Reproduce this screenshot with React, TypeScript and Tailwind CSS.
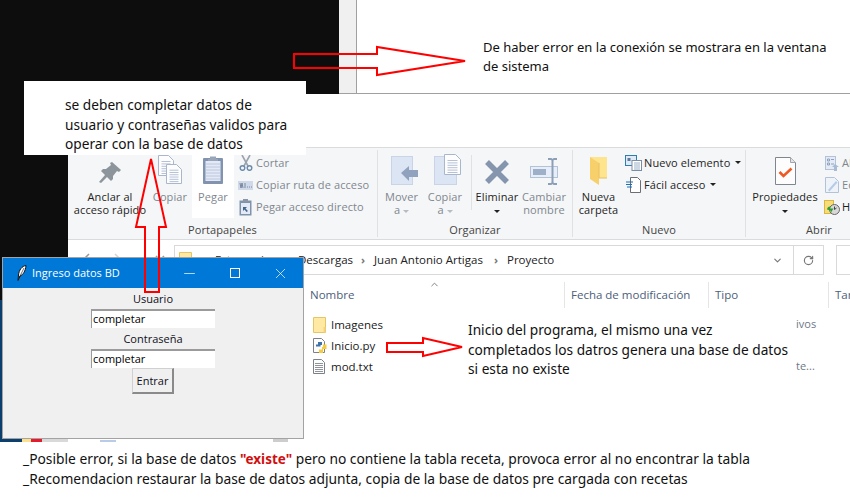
import React from 'react';
import { ChevronDown, ChevronUp, Minus, RotateCw, X } from 'lucide-react';

const uiFont = "font-['Open_Sans','Noto_Sans',sans-serif]";
const noteFont = "font-['Noto_Sans','Open_Sans',sans-serif]";

const Caret = ({ dim = false }: { dim?: boolean }) => (
  <span className={`inline-block w-0 h-0 border-x-[3.5px] border-x-transparent border-t-[3.5px] align-middle ${dim ? 'border-t-[#b5bcc4]' : 'border-t-[#222]'}`} />
);

const PinIcon = () => (
  <svg width="24" height="24" viewBox="0 0 24 24">
    <path d="M14 1l9 8-2 2-2-1-4 5 0 3-2 2-4-4-6 6-2-1 6-7-4-4 2-2 3 0 5-4-1-2z" fill="#8d959c" />
  </svg>
);

const DocLines = ({ x, y, w, h }: { x: number; y: number; w: number; h: number }) => (
  <g>
    <path d={`M${x} ${y}h${w - 5}l5 5v${h - 5}h-${w}z`} fill="#fdfdfe" stroke="#a9b6cc" />
    {[0.3, 0.42, 0.54, 0.66, 0.78, 0.9].map((p) => (
      <path key={p} d={`M${x + 3} ${y + h * p}h${w - 6}`} stroke="#b6c1d6" strokeWidth="1" />
    ))}
  </g>
);

const CopyIcon = () => (
  <svg width="25" height="30" viewBox="0 0 25 30">
    <DocLines x={0.5} y={0.5} w={15} h={20} />
    <DocLines x={8.5} y={9.5} w={15} h={19} />
  </svg>
);

const PasteIcon = () => (
  <svg width="22" height="30" viewBox="0 0 22 30">
    <rect x="1" y="3" width="20" height="26" rx="1" fill="#8193ae" />
    <rect x="3.5" y="6" width="15" height="20" fill="#e3e9f6" />
    {[9, 12, 15, 18, 21, 24].map((y) => (
      <path key={y} d={`M4 ${y}h14`} stroke="#bcc7dc" />
    ))}
    <path d="M8 4V1.5h6V4h2v2H6V4z" fill="#99a5b8" />
  </svg>
);

const ScissorsIcon = () => (
  <svg width="14" height="16" viewBox="0 0 14 16">
    <path d="M3 0l6 11M11 0L5 11" stroke="#9aa3ae" strokeWidth="1.6" fill="none" />
    <circle cx="3.5" cy="13" r="2.3" fill="none" stroke="#6d8bad" strokeWidth="1.5" />
    <circle cx="10.5" cy="13" r="2.3" fill="none" stroke="#6d8bad" strokeWidth="1.5" />
  </svg>
);

const PathIcon = () => (
  <svg width="15" height="9" viewBox="0 0 15 9">
    <rect width="15" height="9" fill="#cfd9ea" />
    <path d="M2 2l1 5 1-5 1 5M7 2v5M9 6h1M11 6h1M13 6h1" stroke="#66758c" strokeWidth="0.8" fill="none" />
  </svg>
);

const PasteLinkIcon = () => (
  <svg width="13" height="17" viewBox="0 0 13 17">
    <rect x="0.5" y="1.5" width="12" height="15" fill="#7f93ab" />
    <rect x="2" y="4" width="9" height="11" fill="#e3e9f6" />
    <rect x="4" y="0" width="5" height="3" fill="#8a96a8" />
    <path d="M4 12V8h4l-1.5 1.5L9 12l-1.500 1-2-2.500L4 12z" fill="#41658c" />
  </svg>
);

const MoveIcon = () => (
  <svg className="ml-[6px]" width="27" height="29" viewBox="0 0 27 29">
    <rect x="0.500" y="0.500" width="21" height="28" fill="#dce5f3" stroke="#c9d4e6" />
    <path d="M10 17l8-7v4h9v7h-9v4z" fill="#90a2bd" />
  </svg>
);

const CopyToIcon = () => (
  <svg className="ml-[4px]" width="27" height="31" viewBox="0 0 27 31">
    <rect x="0.500" y="2.500" width="22" height="28" fill="#dce5f3" stroke="#c9d4e6" />
    <DocLines x={10.5} y={0.5} w={16} h={20} />
  </svg>
);

const DeleteIcon = () => (
  <svg width="26" height="26" viewBox="0 0 26 26">
    <path d="M3 3l20 20M23 3L3 23" stroke="#8595ae" strokeWidth="5.500" />
  </svg>
);

const RenameIcon = () => (
  <svg width="29" height="27" viewBox="0 0 29 27">
    <rect x="0.500" y="8.500" width="27" height="11" fill="#e7eefa" stroke="#b4c2d8" />
    <rect x="3" y="11" width="13" height="6" fill="#9eb0c9" />
    <path d="M18 1h3l1.500 1 1.500-1h3M18 26h3l1.500-1 1.500 1h3M22.500 2v23" stroke="#8d9fb8" strokeWidth="2" fill="none" />
  </svg>
);

const NewFolderIcon = () => (
  <svg width="19" height="29" viewBox="0 0 19 29">
    <path d="M1 1h17v21H1z" fill="#ffe48e" />
    <path d="M1 1l9 6v22l-9-6z" fill="#f7cf6b" />
    <path d="M10 7v15h8" fill="none" stroke="#e8c060" />
  </svg>
);

const NewItemIcon = () => (
  <svg width="17" height="16" viewBox="0 0 17 16">
    <rect x="0.500" y="0.500" width="11" height="10" fill="#dfeaf7" stroke="#2f7dac" />
    <rect x="2.500" y="3" width="3" height="3" fill="#5c7a99" />
    <rect x="7" y="5.500" width="9.500" height="10" fill="#fff" stroke="#7b8da6" />
    <path d="M9 8h6M9 10h6M9 12h6M9 14h6" stroke="#9cb0c8" />
  </svg>
);

const EasyAccessIcon = () => (
  <svg width="15" height="16" viewBox="0 0 15 16">
    <path d="M4.500 0.500h7l3 3v12h-10z" fill="#fff" stroke="#6b6f75" />
    <path d="M0 5h7M0 7.500h6M1 10h5" stroke="#1b6fb8" strokeWidth="1.200" />
  </svg>
);

const PropertiesIcon = () => (
  <svg width="21" height="28" viewBox="0 0 21 28">
    <path d="M0.500 0.500h15l5 5v22h-20z" fill="#fdfdfd" stroke="#80868d" />
    <path d="M15.500 0.500v5h5" fill="#e2e4e7" stroke="#a2a6ab" />
    <path d="M4.500 15l4 4 8-7.500" fill="none" stroke="#ee5a24" strokeWidth="2.600" />
  </svg>
);

const OpenIcon = () => (
  <svg width="14" height="15" viewBox="0 0 14 15">
    <rect x="0.500" y="0.500" width="10" height="13" fill="#e4ebf6" stroke="#b4c2d8" />
    <path d="M2.500 3h2v2h-2zM2.500 7h2v2h-2zM6 3.500h3M6 8h3" stroke="#8ea2bd" fill="none" />
    <path d="M10 8l-3 3h2v4h3v-4h2z" fill="#a9bbd3" />
  </svg>
);

const EditIcon = () => (
  <svg width="14" height="16" viewBox="0 0 14 16">
    <path d="M0.500 0.500h9l4 4v11H0.500z" fill="#eef3fa" stroke="#b4c2d8" />
    <path d="M3 13l8-9 1.500 1.500-8 9z" fill="#b6cbe6" />
  </svg>
);

const HistoryIcon = () => (
  <svg width="16" height="15" viewBox="0 0 16 15">
    <rect x="0.500" y="0.500" width="9" height="13" fill="#f7dc78" stroke="#d8b642" />
    <circle cx="10.500" cy="9.500" r="5" fill="#d8d8d8" stroke="#666" />
    <path d="M10.500 6.500v3l2-1.500" stroke="#444" fill="none" />
    <path d="M3 9.500a3.500 3.500 0 0 1 4-3l-1.500 2 4 0-2.500 4-.5-2z" fill="#2e9e37" />
  </svg>
);

const FolderSmall = () => (
  <svg width="13" height="16" viewBox="0 0 13 16">
    <path d="M0.500 0.500h12v15H0.500z" fill="#ffe9a3" stroke="#e6c566" />
    <path d="M10.500 10v5.500h2V10z" fill="#f4d57e" />
  </svg>
);

const PythonFileIcon = () => (
  <svg width="15" height="16" viewBox="0 0 15 16">
    <path d="M0.500 0.500h8l3 3v11H0.500z" fill="#fdfdfd" stroke="#7c8087" />
    <path d="M5 4h4v3H7.500v1.500H3V6.500h2z" fill="#3d73a8" />
    <path d="M10 6.500h3.500V11H10v4H6v-3.500h3V9h1z" fill="#f7cc3c" />
  </svg>
);

const TextFileIcon = () => (
  <svg width="12" height="15" viewBox="0 0 12 15">
    <path d="M0.500 0.500h8l3 3v11h-11z" fill="#fdfdfd" stroke="#7c8087" />
    {[4, 6, 8, 10, 12].map((y) => (
      <path key={y} d={`M2 ${y + 0.5}h8`} stroke="#8f939a" />
    ))}
  </svg>
);

const FeatherIcon = () => (
  <svg width="10" height="16" viewBox="0 0 10 16">
    <path d="M9 0.500C5 1 2 5 1.500 10L1 15.500 3 11c3-1 5.500-5 6-10.500z" fill="#fff" stroke="#111" strokeWidth="1" />
    <path d="M2 13L7 3" stroke="#111" strokeWidth="0.600" />
  </svg>
);

// one big ribbon button, icon on top and up to two label lines
const RibbonButton = ({
  icon,
  lines,
  width,
  dim = false,
  caret,
  active = false,
}: {
  icon: React.ReactNode;
  lines: string[];
  width: string;
  dim?: boolean;
  caret?: boolean;
  active?: boolean;
}) => (
  <div className={`flex flex-col items-center shrink-0 h-[68px] ${width} ${active ? 'bg-white' : ''}`}>
    <div className="h-[35px] flex items-end justify-center">{icon}</div>
    <div className={`mt-[5px] text-center leading-[13px] text-[11px] tracking-[0.1px] whitespace-nowrap ${dim ? 'text-[#7f8790]' : 'text-[#1e1e1e]'}`}>
      {lines.map((l, i) => (
        <div key={l}>
          {l}
          {caret && dim && i === lines.length - 1 ? <span className="ml-[3px]"><Caret dim /></span> : null}
        </div>
      ))}
      {caret && !dim ? <div><Caret /></div> : null}
    </div>
  </div>
);

const RibbonSmall = ({ icon, text, dim = false, caret = false }: { icon: React.ReactNode; text: string; dim?: boolean; caret?: boolean }) => (
  <div className={`h-[22px] flex items-center whitespace-nowrap text-[11px] tracking-[0.1px] ${dim ? 'text-[#7f8790]' : 'text-[#1e1e1e]'}`}>
    <span className="w-[19px] flex justify-center shrink-0">{icon}</span>
    <span className="ml-[1px]">{text}</span>
    {caret ? <span className="ml-[5px] -mt-[3px]"><Caret /></span> : null}
  </div>
);

const GroupLabel = ({ children }: { children: React.ReactNode }) => (
  <div className="mt-[4px] text-center text-[11px] tracking-[0.1px] text-[#444] leading-[16px]">{children}</div>
);

const Sep = ({ className }: { className: string }) => (
  <span className={`text-[#777] font-bold text-[11px] ${className}`}>›</span>
);

const Explorer = () => (
  <div className={`absolute left-[68px] top-[94px] w-[782px] h-[348px] bg-white overflow-hidden ${uiFont}`}>
    <div className="h-[53px]" />
    {/* ribbon */}
    <div className="h-[93px] flex bg-[#f5f6f7] border-y border-[#dadbdc]">
      <div className="w-[310px] shrink-0 border-r border-[#dfe1e3] my-[2px] flex flex-col">
        <div className="flex h-[68px]">
          <RibbonButton icon={<PinIcon />} lines={['Anclar al', 'acceso rápido']} width="w-[84px]" />
          <RibbonButton icon={<CopyIcon />} lines={['Copiar']} width="w-[36px]" dim />
          <div className="w-[4px] shrink-0" />
          <RibbonButton icon={<PasteIcon />} lines={['Pegar']} width="w-[42px]" dim active />
          <div className="ml-[2px] mt-[2px] flex flex-col">
            <RibbonSmall icon={<ScissorsIcon />} text="Cortar" dim />
            <RibbonSmall icon={<PathIcon />} text="Copiar ruta de acceso" dim />
            <RibbonSmall icon={<PasteLinkIcon />} text="Pegar acceso directo" dim />
          </div>
        </div>
        <GroupLabel>Portapapeles</GroupLabel>
      </div>
      <div className="w-[195px] shrink-0 border-r border-[#dfe1e3] my-[2px] flex flex-col">
        <div className="flex h-[68px]">
          <RibbonButton icon={<MoveIcon />} lines={['Mover', 'a']} width="w-[47px]" dim caret />
          <RibbonButton icon={<CopyToIcon />} lines={['Copiar', 'a']} width="w-[40px]" dim caret />
          <div className="w-px h-[55px] mt-[5px] ml-[6px] bg-[#dfe1e3]" />
          <RibbonButton icon={<DeleteIcon />} lines={['Eliminar']} width="w-[50px]" caret />
          <RibbonButton icon={<RenameIcon />} lines={['Cambiar', 'nombre']} width="w-[44px]" dim />
        </div>
        <GroupLabel>Organizar</GroupLabel>
      </div>
      <div className="w-[173px] shrink-0 border-r border-[#dfe1e3] my-[2px] flex flex-col">
        <div className="flex h-[68px]">
          <RibbonButton icon={<NewFolderIcon />} lines={['Nueva', 'carpeta']} width="w-[51px]" />
          <div className="mt-[2px] flex flex-col">
            <RibbonSmall icon={<NewItemIcon />} text="Nuevo elemento" caret />
            <RibbonSmall icon={<EasyAccessIcon />} text="Fácil acceso" caret />
          </div>
        </div>
        <GroupLabel>Nuevo</GroupLabel>
      </div>
      <div className="w-[104px] shrink-0 my-[2px] flex flex-col">
        <div className="flex h-[68px]">
          <RibbonButton icon={<PropertiesIcon />} lines={['Propiedades']} width="w-[78px]" caret />
          <div className="-ml-[2px] mt-[2px] flex flex-col">
            <RibbonSmall icon={<OpenIcon />} text="Abrir" dim />
            <RibbonSmall icon={<EditIcon />} text="Editar" dim />
            <RibbonSmall icon={<HistoryIcon />} text="Historial" />
          </div>
        </div>
        <div className="pl-[42px]"><GroupLabel>Abrir</GroupLabel></div>
      </div>
    </div>
    {/* address bar */}
    <div className="flex mt-[5px] h-[30px] text-[11.5px] text-[#222]">
      <div className="w-[106px] shrink-0">
        <svg width="106" height="30" viewBox="0 0 106 30" fill="none" stroke="#999" strokeWidth="1.500">
          <path d="M21 9l-4 4 4 4M14 13h10" />
          <path d="M47 9l4 4-4 4M42 13h10" stroke="#d5d5d5" />
          <path d="M88 11l4 4 4-4" />
        </svg>
      </div>
      <div className="w-[650px] shrink-0 border border-[#d9d9d9] flex items-center pl-[4px]">
        <FolderSmall />
        <span className="ml-[23px] w-[72px] shrink-0">Este equipo</span>
        <Sep className="w-[11px] shrink-0" />
        <span className="w-[53px] shrink-0">Descargas</span>
        <Sep className="ml-[10px] w-[13px] shrink-0" />
        <span className="w-[110px] shrink-0 whitespace-nowrap">Juan Antonio Artigas</span>
        <Sep className="ml-[10px] w-[13px] shrink-0" />
        <span>Proyecto</span>
        <div className="ml-auto flex h-full items-center">
          <ChevronDown className="w-[11px] h-[11px] mr-[10px] text-[#777]" strokeWidth={2.5} />
          <div className="w-[30px] h-full border-l border-[#d9d9d9] flex items-center justify-center">
            <RotateCw className="w-[11px] h-[11px] text-[#777]" strokeWidth={2.5} />
          </div>
        </div>
      </div>
      <div className="ml-[12px] flex-1 border border-[#d9d9d9] border-r-0" />
    </div>
    {/* column headers */}
    <div className="relative flex h-[26px] mt-[7px] text-[11.5px] text-[#4c607a] leading-[26px]">
      <div className="w-[497px] shrink-0 pl-[242px] border-r border-[#e5e5e5]">Nombre</div>
      <div className="w-[144px] shrink-0 pl-[6px] border-r border-[#e5e5e5]">Fecha de modificación</div>
      <div className="w-[120px] shrink-0 pl-[6px] border-r border-[#e5e5e5]">Tipo</div>
      <div className="flex-1 pl-[6px]">Tam</div>
      <ChevronUp className="absolute left-[361px] -top-[3px] w-[11px] h-[11px] text-[#777]" />
    </div>
    {/* files */}
    <div className="mt-[6px] pl-[245px] text-[11.5px] text-[#1a1a1a]">
      {[
        { icon: <FolderSmall />, name: 'Imagenes', type: 'ivos' },
        { icon: <PythonFileIcon />, name: 'Inicio.py', type: '' },
        { icon: <TextFileIcon />, name: 'mod.txt', type: 'te...' },
      ].map((f) => (
        <div key={f.name} className="h-[21px] flex items-center">
          <span className="w-[18px] shrink-0 flex">{f.icon}</span>
          <span>{f.name}</span>
          <span className="absolute left-[728px] text-[#6d7888] text-[11px]">{f.type}</span>
        </div>
      ))}
    </div>
  </div>
);

const TkWindow = () => (
  <div className={`absolute left-[2px] top-[257px] w-[302px] h-[182px] border border-[#a3a3a3] bg-[#f0f0f0] flex flex-col ${uiFont}`}>
    <div className="h-[30px] shrink-0 bg-[#0078d7] flex items-center text-white">
      <span className="ml-[11px] w-[16px] flex justify-center"><FeatherIcon /></span>
      <span className="ml-[2px] text-[11px]">Ingreso datos BD</span>
      <Minus className="ml-auto w-[17px] h-[17px]" strokeWidth={1} absoluteStrokeWidth />
      <span className="ml-[32px] w-[10px] h-[10px] border border-white" />
      <X className="ml-[32px] mr-[14px] w-[17px] h-[17px]" strokeWidth={1} absoluteStrokeWidth />
    </div>
    <div className="flex flex-col items-center text-[11px] text-[#0f0f20] leading-[20px]">
      <div className="mt-[1px]">Usuario</div>
      <div className="w-[124px] h-[19px] bg-white border-t-2 border-l border-[#9b9b9b] pl-[1px] leading-[15px] text-black">completar</div>
      <div className="mt-[1px]">Contraseña</div>
      <div className="w-[124px] h-[19px] bg-white border-t-2 border-l border-[#9b9b9b] pl-[1px] leading-[15px] text-black">completar</div>
      <div className="w-[42px] h-[26px] bg-[#f0f0f0] border border-[#d0d0d0] border-r-2 border-b-2 border-r-[#8a8a8a] border-b-[#8a8a8a] text-center leading-[23px]">Entrar</div>
    </div>
  </div>
);

export default function App() {
  return (
    <div className="relative w-[850px] h-[500px] bg-white overflow-hidden">
      {/* dark desktop behind the pasted windows */}
      <div className="absolute left-0 top-0 w-[339px] h-[258px] bg-[#0d0d0d]" />
      <div className="absolute left-0 top-[300px] w-[68px] h-[138px] bg-[#0b3f6e]" />
      <div className="absolute left-0 top-[258px] w-[68px] h-[42px] bg-[#0d0d0d]" />
      <div className="absolute left-0 top-[438px] w-[68px] h-[4px] flex">
        <div className="w-[22px] bg-[#0b3f6e]" />
        <div className="w-[9px] bg-[#fde08d]" />
        <div className="w-[11px] bg-[#e8192c]" />
        <div className="flex-1 bg-[#d9d9d9]" />
      </div>

      {/* system window at the top */}
      <div className="absolute left-[339px] top-0 right-0 h-[94px] bg-white border-b border-[#a0a0a0] flex">
        <div className="w-[17px] bg-[#f0f0f0] border-r border-[#a0a0a0] box-content" />
      </div>

      <Explorer />

      <div className="absolute left-[100px] top-[440px] w-[16px] h-[2px] bg-[#b9cbe6]" />
      <div className="absolute left-[273px] top-[438px] w-[15px] h-[4px] bg-[#cdcdcd]" />

      <TkWindow />

      {/* notes pasted over the screenshot */}
      <div className={`absolute left-[24px] top-[81px] w-[282px] h-[74px] bg-white pl-[41px] pt-[14px] text-[13.7px] leading-[19.5px] text-[#111] ${noteFont}`}>
        <div>se deben completar datos de</div>
        <div>usuario y contraseñas validos para</div>
        <div>operar con la base de datos</div>
      </div>
      <div className={`absolute left-[483px] top-[38px] text-[13px] leading-[18.5px] text-[#111] ${noteFont}`}>
        <div>De haber error en la conexión se mostrara en la ventana</div>
        <div>de sistema</div>
      </div>
      <div className={`absolute left-[468px] top-[320px] w-[327px] bg-white text-[13.7px] leading-[19.5px] text-[#111] ${noteFont}`}>
        <div>Inicio del programa, el mismo una vez</div>
        <div>completados los datros genera una base de datos</div>
        <div>si esta no existe</div>
      </div>
      <div className={`absolute left-[23px] top-[449px] text-[13.8px] leading-[20px] text-[#111] whitespace-nowrap ${noteFont}`}>
        <div>
          _Posible error, si la base de datos <span className="font-bold text-[13.5px] text-[#d01010]">"existe"</span> pero no contiene la tabla receta, provoca error al no encontrar la tabla
        </div>
        <div>_Recomendacion restaurar la base de datos adjunta, copia de la base de datos pre cargada con recetas</div>
      </div>

      {/* red arrows */}
      <svg className="absolute left-0 top-0 pointer-events-none" width="850" height="500" fill="none" stroke="#ff0000" strokeWidth="2">
        <path d="M294 54H377V47L465 61L377 75V68H294Z" />
        <path d="M151 159L166 227H159V292H145V227H136Z" />
        <path d="M387 343H423V338L462 347L423 356V352H387Z" />
      </svg>
    </div>
  );
}
